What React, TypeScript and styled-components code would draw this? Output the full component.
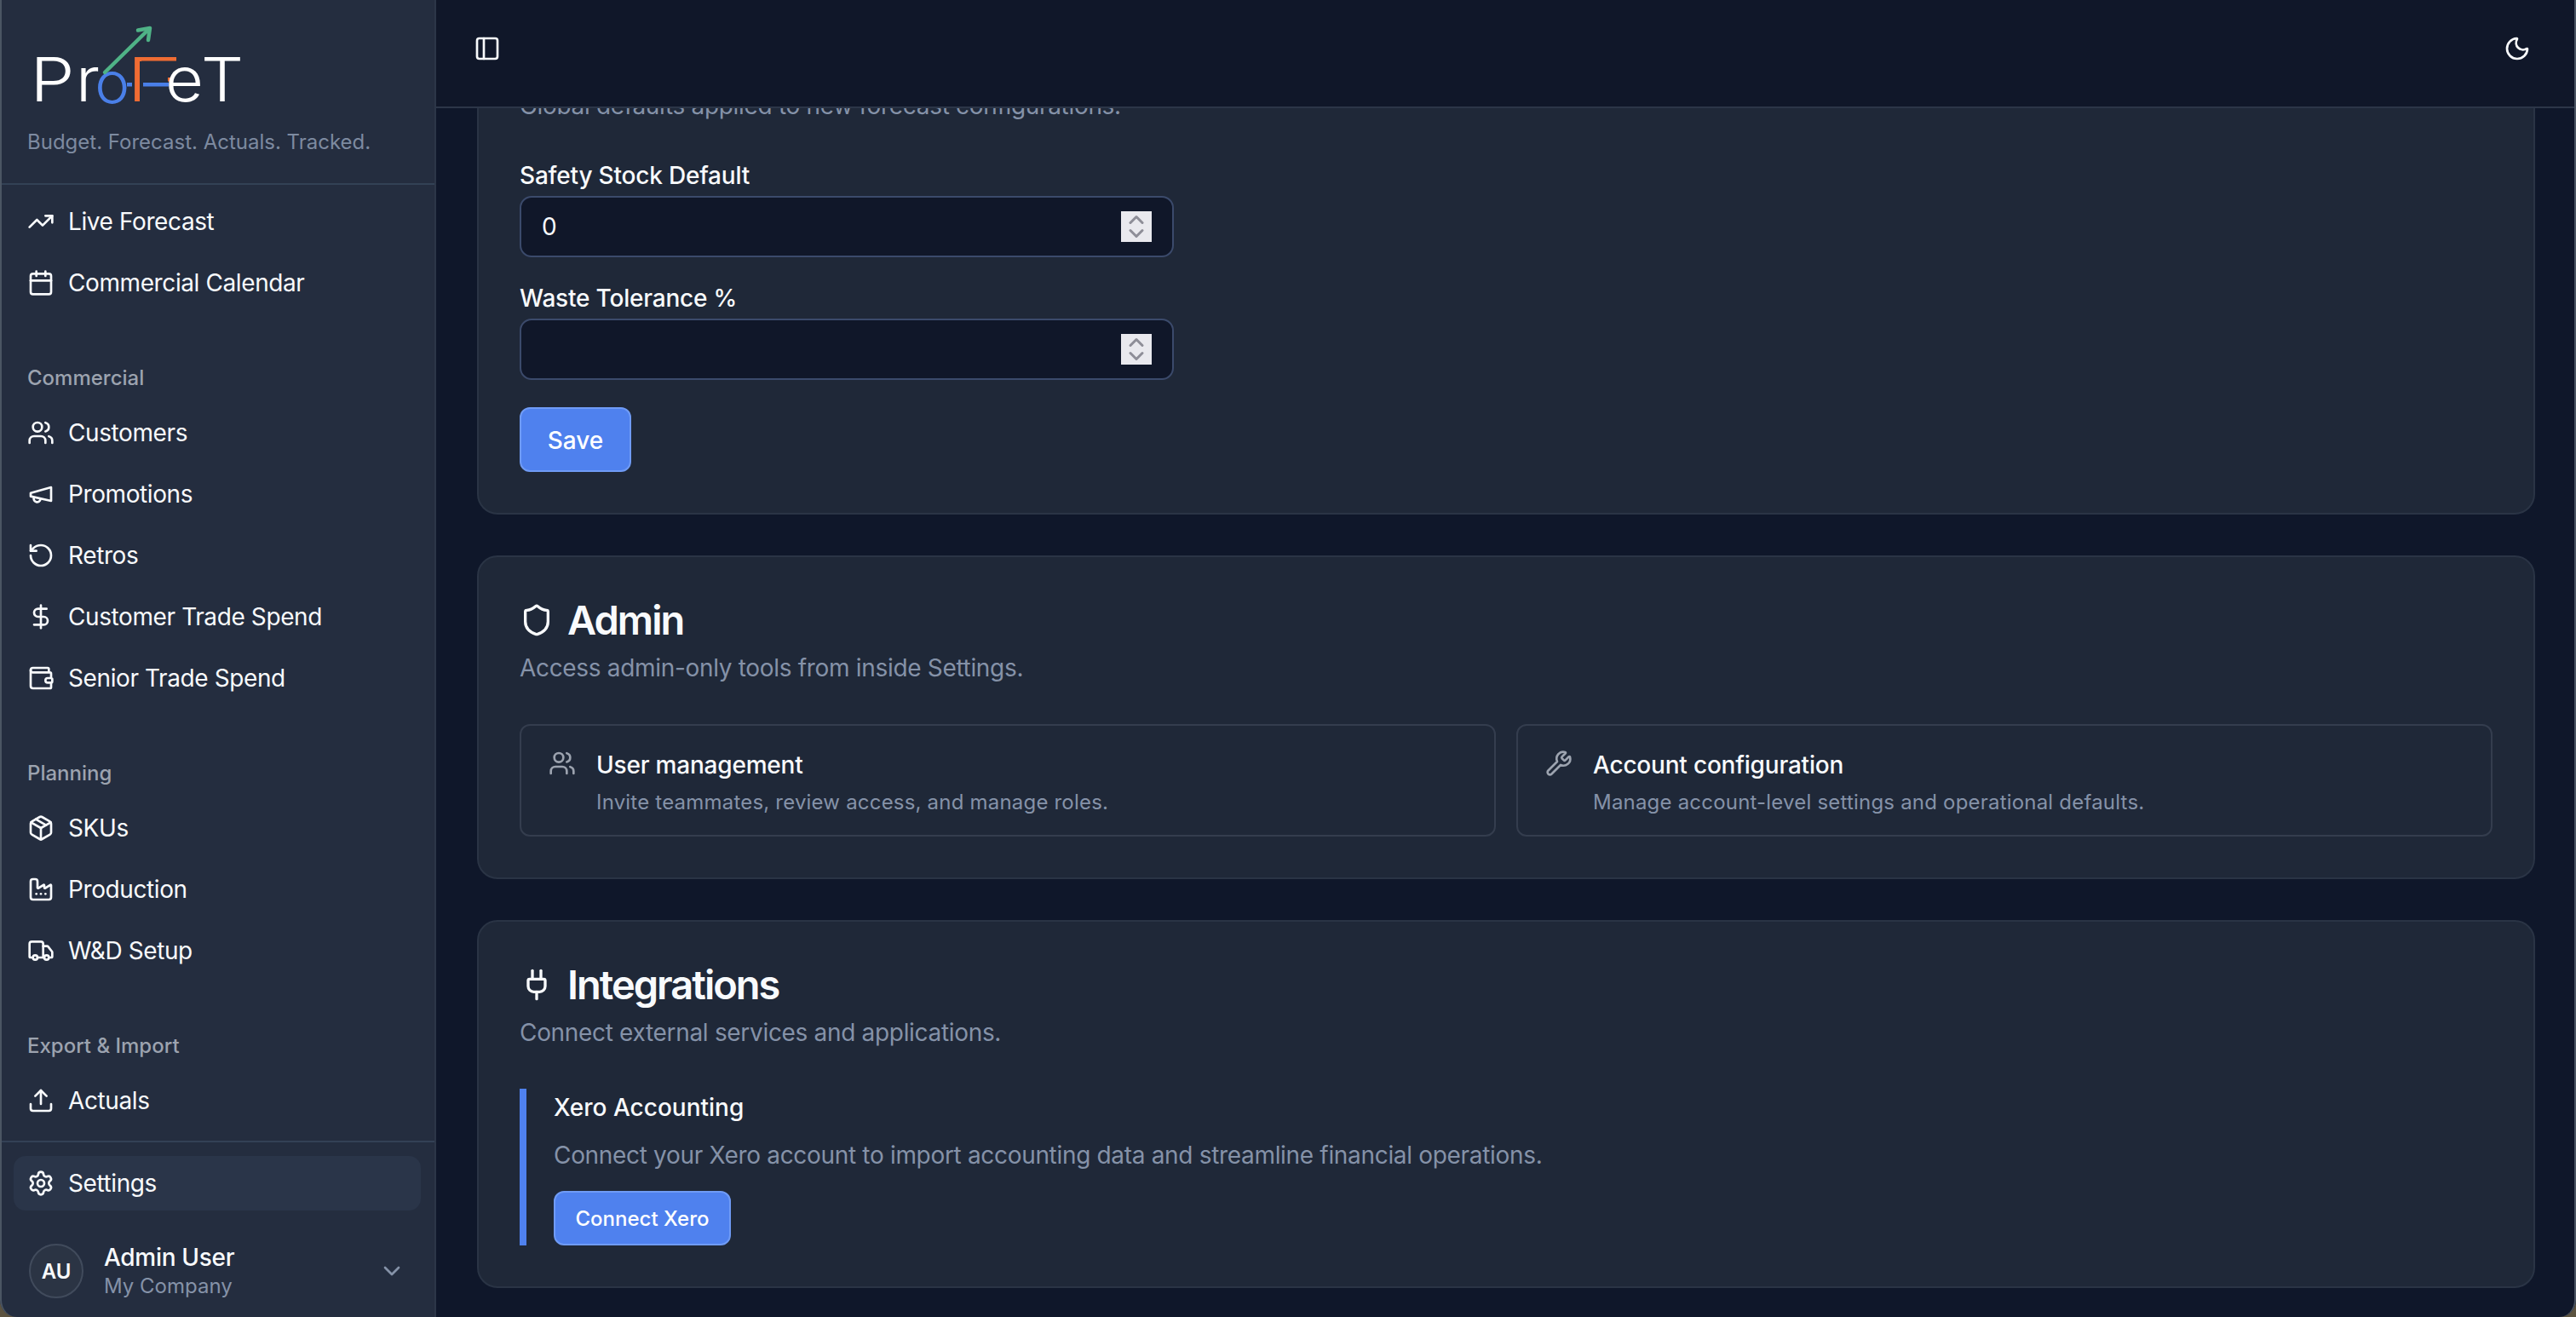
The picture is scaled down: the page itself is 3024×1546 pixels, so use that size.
import React from "react";
import styled, { createGlobalStyle } from "styled-components";
import {
  TrendingUp, Calendar, Users, RotateCcw, DollarSign, Package, Factory, Truck, Upload,
  Settings, ChevronDown, ChevronUp, PanelLeft, Moon, Shield, Wrench, Plug,
} from "lucide-react";

const Global = createGlobalStyle`
  html, body { margin: 0; padding: 0; height: 100%; background: #0f172a; }
  #root { height: 100%; }
  * { box-sizing: border-box; }
  body { font-family: Inter, "Noto Sans", sans-serif; color: #f8fafc; -webkit-font-smoothing: antialiased; }
`;

const Shell = styled.div`
  position: relative;
  display: flex;
  width: 3024px;
  height: 1546px;
  overflow: hidden;
  background: #5c5340;
`;
const Frame = styled.div`
  position: absolute;
  inset: 0;
  pointer-events: none;
  border-left: 2px solid #4b5563;
  border-right: 2px solid #4b5563;
  border-bottom-left-radius: 20px;
  border-bottom-right-radius: 20px;
`;
const Sidebar = styled.aside`
  width: 512px;
  flex: none;
  display: flex;
  flex-direction: column;
  background: #242d3f;
  border-right: 2px solid #2c3648;
  border-bottom-left-radius: 20px;
`;
const Brand = styled.div`
  height: 217px;
  flex: none;
  border-bottom: 2px solid #334155;
`;
const Logo = styled.svg`
  display: block;
  width: 300px;
  height: 140px;
  margin-bottom: 11px;
`;
const Tagline = styled.div`
  margin-left: 32px;
  font-size: 24px;
  line-height: 32px;
  color: #7d8aa0;
`;
const Nav = styled.nav`
  flex: 1;
  min-height: 0;
  padding: 7px 16px 0;
  display: flex;
  flex-direction: column;
`;
const Group = styled.div`
  margin-bottom: 56px;
  display: flex;
  flex-direction: column;
  &:last-child { margin-bottom: 0; }
`;
const GroupLabel = styled.div`
  height: 40px;
  margin-bottom: 8px;
  padding-left: 16px;
  font-size: 24px;
  font-weight: 500;
  line-height: 40px;
  color: #9ca3af;
`;
const NavItem = styled.div`
  height: 72px;
  display: flex;
  align-items: center;
  gap: 16px;
  padding-left: 16px;
  font-size: 28px;
  letter-spacing: -0.4px;
  color: #f8fafc;
  svg { flex: none; }
`;
const Footer = styled.div`
  flex: none;
  border-top: 2px solid #334155;
  padding: 16px 16px 0;
  height: 207px;
`;
const ActiveItem = styled(NavItem)`
  height: 64px;
  border-radius: 14px;
  background: #2a3549;
`;
const UserRow = styled.div`
  display: flex;
  align-items: center;
  margin-top: 37px;
  padding-left: 18px;
`;
const Avatar = styled.div`
  width: 64px;
  height: 64px;
  flex: none;
  border-radius: 50%;
  display: flex;
  align-items: center;
  justify-content: center;
  background: #2b3444;
  border: 2px solid #414b5c;
  font-size: 24px;
  font-weight: 600;
`;
const UserText = styled.div`
  margin-left: 24px;
  flex: 1;
`;
const UserName = styled.div`
  font-size: 28px;
  line-height: 36px;
  font-weight: 500;
  letter-spacing: -0.3px;
`;
const UserCompany = styled.div`
  font-size: 24px;
  line-height: 32px;
  color: #8592a8;
`;
const UserChevron = styled(ChevronDown)`
  margin-right: 18px;
  color: #8592a8;
`;

const Main = styled.main`
  flex: 1;
  min-width: 0;
  display: flex;
  flex-direction: column;
  background: #0f172a;
  border-bottom-right-radius: 20px;
  overflow: hidden;
`;
const Header = styled.header`
  height: 127px;
  flex: none;
  display: flex;
  justify-content: space-between;
  padding: 41px 53px 0 44px;
  background: #101729;
  border-bottom: 2px solid #2c3648;
  svg { display: block; }
`;
const Content = styled.div`
  flex: 1;
  min-height: 0;
  overflow: hidden;
  padding: 0 48px;
  display: flex;
  flex-direction: column;
  gap: 48px;
`;
const Card = styled.section`
  flex: none;
  padding: 48px;
  background: #1f2838;
  border: 2px solid #2a3445;
  border-radius: 24px;
`;
const ClippedCard = styled(Card)`
  margin-top: -74px;
`;
const CardHead = styled.div`
  padding-top: 2px;
  margin-bottom: 46px;
`;
const ClippedHead = styled.div`
  padding-top: 1px;
  margin-bottom: 42px;
`;
const Title = styled.h2`
  margin: 0 0 12px;
  display: flex;
  align-items: center;
  gap: 16px;
  font-size: 47px;
  line-height: 48px;
  font-weight: 600;
  letter-spacing: -2px;
  color: #f8fafc;
`;
const Sub = styled.p`
  margin: 0;
  font-size: 28px;
  line-height: 40px;
  letter-spacing: -0.32px;
  color: #8592a8;
`;
const Field = styled.div`
  margin-bottom: 28px;
`;
const Label = styled.label`
  display: block;
  margin-bottom: 4px;
  font-size: 28px;
  line-height: 40px;
  font-weight: 500;
  letter-spacing: -0.2px;
`;
const InputBox = styled.div`
  width: 768px;
  height: 72px;
  display: flex;
  align-items: center;
  padding: 0 24px;
  background: #101729;
  border: 2px solid #3b4a6b;
  border-radius: 14px;
`;
const Input = styled.input`
  flex: 1;
  min-width: 0;
  background: none;
  border: 0;
  outline: 0;
  padding: 0;
  font: 400 28px Inter, sans-serif;
  color: #f8fafc;
`;
const Spinner = styled.span`
  width: 36px;
  height: 36px;
  flex: none;
  display: flex;
  flex-direction: column;
  align-items: center;
  justify-content: center;
  background: #e9e9ee;
  color: #8e8e98;
  svg { display: block; margin: -6px 0; }
`;
const PrimaryButton = styled.button`
  display: block;
  border: 2px solid #6f9bf5;
  background: #4f81ee;
  color: #fff;
  font-family: Inter, sans-serif;
  font-weight: 500;
  border-radius: 12px;
`;
const SaveButton = styled(PrimaryButton)`
  width: 131px;
  height: 76px;
  margin-top: 32px;
  padding-top: 3px;
  font-size: 28px;
`;
const ConnectButton = styled(PrimaryButton)`
  width: 208px;
  height: 64px;
  margin-top: 22px;
  font-size: 24px;
`;
const ToolGrid = styled.div`
  display: grid;
  grid-template-columns: 1fr 1fr;
  gap: 24px;
`;
const Tool = styled.div`
  height: 132px;
  display: flex;
  align-items: flex-start;
  gap: 24px;
  padding: 26px 32px 0;
  border: 2px solid #343d4e;
  border-radius: 12px;
  svg { flex: none; margin-top: 2px; color: #9ca3af; }
`;
const ToolTitle = styled.div`
  font-size: 28px;
  line-height: 40px;
  font-weight: 500;
  letter-spacing: -0.2px;
  margin-bottom: 8px;
`;
const ToolDesc = styled.div`
  font-size: 24px;
  line-height: 32px;
  letter-spacing: 0.2px;
  color: #8592a8;
`;
const Integration = styled.div`
  border-left: 8px solid #4f81ee;
  padding: 2px 0 0 32px;
`;
const IntegrationTitle = styled.div`
  font-size: 28px;
  line-height: 40px;
  font-weight: 500;
  margin-bottom: 16px;
`;

const ic = { size: 32, strokeWidth: 2 };

const Megaphone = () => (
  <svg width="32" height="32" viewBox="0 0 24 24" fill="none" stroke="currentColor" strokeWidth="2" strokeLinecap="round" strokeLinejoin="round">
    <path d="m3 11 18-5v12L3 14v-3z" />
    <path d="M11.6 16.8a3 3 0 1 1-5.8-1.6" />
  </svg>
);
const WalletIcon = () => (
  <svg width="32" height="32" viewBox="0 0 24 24" fill="none" stroke="currentColor" strokeWidth="2" strokeLinecap="round" strokeLinejoin="round">
    <path d="M19 7V4a1 1 0 0 0-1-1H5a2 2 0 0 0 0 4h15a1 1 0 0 1 1 1v4h-3a2 2 0 0 0 0 4h3a1 1 0 0 0 1-1v-2a1 1 0 0 0-1-1" />
    <path d="M3 5v14a2 2 0 0 0 2 2h15a1 1 0 0 0 1-1v-4" />
  </svg>
);

const BrandLogo = () => (
  <Logo viewBox="0 0 300 140" role="img" aria-label="ProFeT">
    <g fontFamily="Inter, sans-serif" fontWeight="300" fontSize="72" fill="#fff">
      <text x="35.5" y="119" textLength="52" lengthAdjust="spacingAndGlyphs">P</text>
      <text x="89" y="119" textLength="28" lengthAdjust="spacingAndGlyphs">r</text>
      <text x="111.3" y="121" textLength="41" lengthAdjust="spacingAndGlyphs" fill="#4a7fe8" fontSize="67">o</text>
      <text x="147" y="119" textLength="68" lengthAdjust="spacingAndGlyphs" fill="#ef6c33">F</text>
    </g>
    <rect x="164" y="72" width="33" height="48" fill="#242d3f" />
    <g fontFamily="Inter, sans-serif" fontWeight="300" fontSize="72" fill="#fff">
      <text x="194" y="119" textLength="45" lengthAdjust="spacingAndGlyphs">e</text>
      <text x="236" y="119" textLength="50" lengthAdjust="spacingAndGlyphs">T</text>
    </g>
    <rect x="149" y="97" width="6" height="4.5" fill="#4a7fe8" />
    <rect x="168" y="97" width="30" height="4.5" fill="#4a7fe8" />
    <g fill="none" stroke="#4fb286" strokeWidth="4.5" strokeLinecap="round" strokeLinejoin="round">
      <path d="M123 85 175 34" />
      <path d="M162 35.5 176 33 174 47" />
    </g>
  </Logo>
);

export default function App() {
  return (
    <>
      <Global />
      <Shell>
        <Sidebar>
          <Brand>
            <BrandLogo />
            <Tagline>Budget. Forecast. Actuals. Tracked.</Tagline>
          </Brand>
          <Nav>
            <Group>
              <NavItem><TrendingUp {...ic} />Live Forecast</NavItem>
              <NavItem><Calendar {...ic} />Commercial Calendar</NavItem>
            </Group>
            <Group>
              <GroupLabel>Commercial</GroupLabel>
              <NavItem><Users {...ic} />Customers</NavItem>
              <NavItem><Megaphone />Promotions</NavItem>
              <NavItem><RotateCcw {...ic} />Retros</NavItem>
              <NavItem><DollarSign {...ic} />Customer Trade Spend</NavItem>
              <NavItem><WalletIcon />Senior Trade Spend</NavItem>
            </Group>
            <Group>
              <GroupLabel>Planning</GroupLabel>
              <NavItem><Package {...ic} />SKUs</NavItem>
              <NavItem><Factory {...ic} />Production</NavItem>
              <NavItem><Truck {...ic} />W&amp;D Setup</NavItem>
            </Group>
            <Group>
              <GroupLabel>Export &amp; Import</GroupLabel>
              <NavItem><Upload {...ic} />Actuals</NavItem>
            </Group>
          </Nav>
          <Footer>
            <ActiveItem><Settings {...ic} />Settings</ActiveItem>
            <UserRow>
              <Avatar>AU</Avatar>
              <UserText>
                <UserName>Admin User</UserName>
                <UserCompany>My Company</UserCompany>
              </UserText>
              <UserChevron size={32} />
            </UserRow>
          </Footer>
        </Sidebar>
        <Main>
          <Header>
            <PanelLeft {...ic} />
            <Moon {...ic} />
          </Header>
          <Content>
            <ClippedCard>
              <ClippedHead>
                <Sub>Global defaults applied to new forecast configurations.</Sub>
              </ClippedHead>
              <Field>
                <Label>Safety Stock Default</Label>
                <InputBox>
                  <Input defaultValue="0" />
                  <Spinner><ChevronUp size={28} strokeWidth={2.6} /><ChevronDown size={28} strokeWidth={2.6} /></Spinner>
                </InputBox>
              </Field>
              <Field>
                <Label>Waste Tolerance %</Label>
                <InputBox>
                  <Input />
                  <Spinner><ChevronUp size={28} strokeWidth={2.6} /><ChevronDown size={28} strokeWidth={2.6} /></Spinner>
                </InputBox>
              </Field>
              <SaveButton>Save</SaveButton>
            </ClippedCard>
            <Card>
              <CardHead>
                <Title><Shield size={40} strokeWidth={2} />Admin</Title>
                <Sub>Access admin-only tools from inside Settings.</Sub>
              </CardHead>
              <ToolGrid>
                <Tool>
                  <Users {...ic} />
                  <div>
                    <ToolTitle>User management</ToolTitle>
                    <ToolDesc>Invite teammates, review access, and manage roles.</ToolDesc>
                  </div>
                </Tool>
                <Tool>
                  <Wrench {...ic} />
                  <div>
                    <ToolTitle>Account configuration</ToolTitle>
                    <ToolDesc>Manage account-level settings and operational defaults.</ToolDesc>
                  </div>
                </Tool>
              </ToolGrid>
            </Card>
            <Card>
              <CardHead>
                <Title><Plug size={40} strokeWidth={2} />Integrations</Title>
                <Sub>Connect external services and applications.</Sub>
              </CardHead>
              <Integration>
                <IntegrationTitle>Xero Accounting</IntegrationTitle>
                <Sub>Connect your Xero account to import accounting data and streamline financial operations.</Sub>
                <ConnectButton>Connect Xero</ConnectButton>
              </Integration>
            </Card>
          </Content>
        </Main>
        <Frame />
      </Shell>
    </>
  );
}
